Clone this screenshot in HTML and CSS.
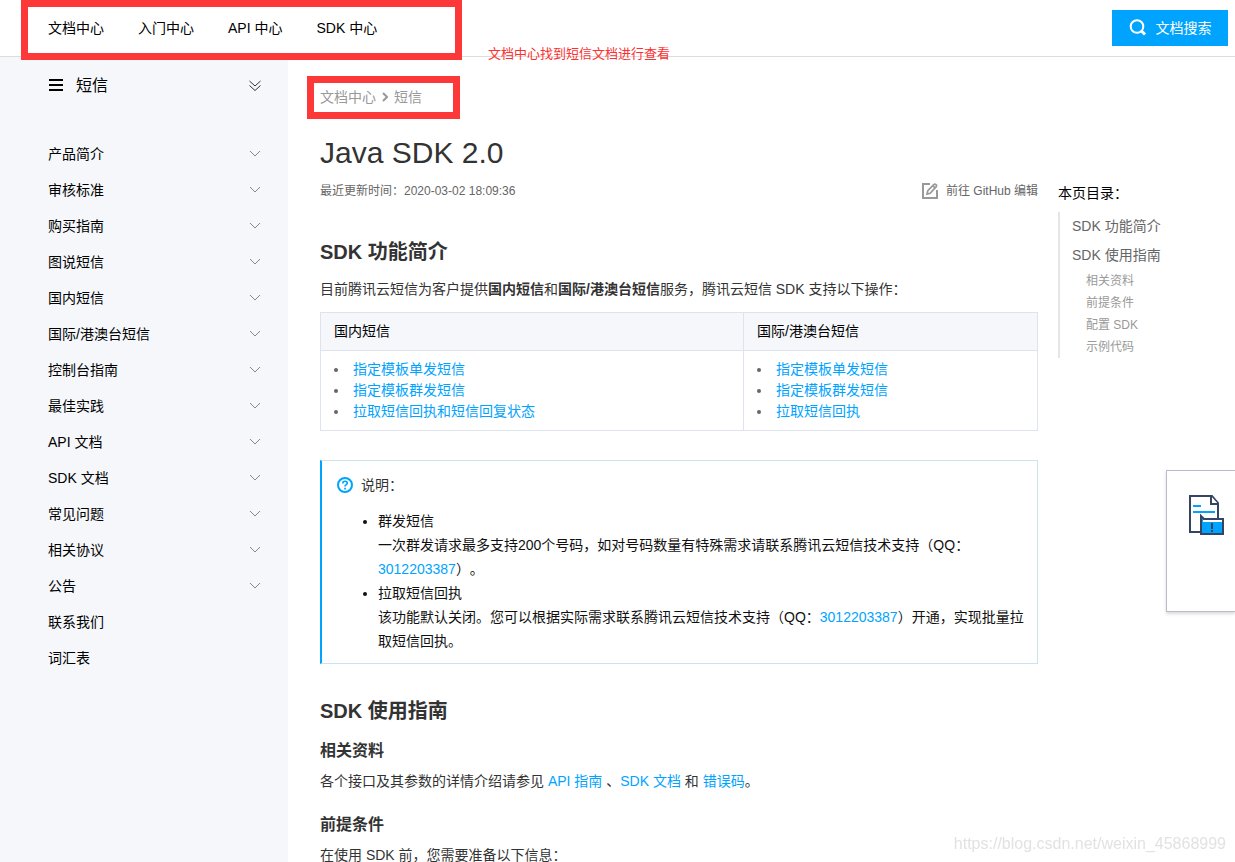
FILE: index.html
```html
<!DOCTYPE html>
<html lang="zh-CN">
<head>
<meta charset="utf-8">
<meta name="viewport" content="width=device-width, initial-scale=1">
<title>Java SDK 2.0</title>
<link rel="stylesheet" href="styles.css">
</head>
<body>
<svg class="sprite" aria-hidden="true">
  <symbol id="chevron" viewBox="0 0 12 8"><path d="M1 1l5 5 5-5" fill="none" stroke="currentColor"/></symbol>
</svg>
<header class="topbar">
  <nav class="topnav">
    <a href="#">文档中心</a>
    <a href="#">入门中心</a>
    <a href="#">API 中心</a>
    <a href="#">SDK 中心</a>
    <span class="frame frame-nav"></span>
  </nav>
  <span class="remark">文档中心找到短信文档进行查看</span>
  <button class="search" type="button">
    <svg width="18" height="18" viewBox="0 0 18 18" aria-hidden="true"><circle cx="8" cy="7.500" r="6.300" fill="none" stroke="#fff" stroke-width="2"/><path d="M12 11.500l4 4" stroke="#fff" stroke-width="3"/></svg>
    文档搜索
  </button>
</header>
<div class="layout">
  <aside class="sidebar">
    <div class="side-head">
      <svg width="16" height="14" viewBox="0 0 16 14" aria-hidden="true"><path d="M1 1h14M1 6h14M1 11h14" stroke="#000" stroke-width="2"/></svg>
      <span class="side-title">短信</span>
      <button class="collapse" type="button" aria-label="全部展开">
        <svg width="12" height="12" viewBox="0 0 12 12" aria-hidden="true"><path d="M.5 1L6 6l5.500-5M.5 5.500L6 10.500l5.500-5" fill="none" stroke="#333"/></svg>
      </button>
    </div>
    <ul class="menu">
      <li><button type="button">产品简介<svg class="chev"><use href="#chevron"/></svg></button></li>
      <li><button type="button">审核标准<svg class="chev"><use href="#chevron"/></svg></button></li>
      <li><button type="button">购买指南<svg class="chev"><use href="#chevron"/></svg></button></li>
      <li><button type="button">图说短信<svg class="chev"><use href="#chevron"/></svg></button></li>
      <li><button type="button">国内短信<svg class="chev"><use href="#chevron"/></svg></button></li>
      <li><button type="button">国际/港澳台短信<svg class="chev"><use href="#chevron"/></svg></button></li>
      <li><button type="button">控制台指南<svg class="chev"><use href="#chevron"/></svg></button></li>
      <li><button type="button">最佳实践<svg class="chev"><use href="#chevron"/></svg></button></li>
      <li><button type="button">API 文档<svg class="chev"><use href="#chevron"/></svg></button></li>
      <li><button type="button">SDK 文档<svg class="chev"><use href="#chevron"/></svg></button></li>
      <li><button type="button">常见问题<svg class="chev"><use href="#chevron"/></svg></button></li>
      <li><button type="button">相关协议<svg class="chev"><use href="#chevron"/></svg></button></li>
      <li><button type="button">公告<svg class="chev"><use href="#chevron"/></svg></button></li>
      <li><a href="#">联系我们</a></li>
      <li><a href="#">词汇表</a></li>
    </ul>
  </aside>
  <main class="article">
    <nav class="crumbs">
      <a href="#">文档中心</a>
      <svg width="6" height="10" viewBox="0 0 6 10" aria-hidden="true"><path d="M1 1l4 4-4 4" fill="none" stroke="#999" stroke-width="2"/></svg>
      <a href="#">短信</a>
      <span class="frame frame-crumbs"></span>
    </nav>
    <h1>Java SDK 2.0</h1>
    <div class="meta">
      <span>最近更新时间：2020-03-02 18:09:36</span>
      <a class="github" href="#">
        <svg width="16" height="16" viewBox="0 0 16 16" aria-hidden="true"><path d="M8 1H1v14h14V7" fill="none" stroke="#999" stroke-width="2"/><path d="M5 11l.8-3.300L12 1.500q1-.8 2 .1t.2 2L8.200 10.200zM10.800 2.700l2.300 2.300" fill="none" stroke="#999" stroke-width="1.700"/></svg>
        前往 GitHub 编辑
      </a>
    </div>
    <h2 id="intro">SDK 功能简介</h2>
    <p>目前腾讯云短信为客户提供<strong>国内短信</strong>和<strong>国际/港澳台短信</strong>服务，腾讯云短信 SDK 支持以下操作：</p>
    <table class="features">
      <thead><tr><th>国内短信</th><th>国际/港澳台短信</th></tr></thead>
      <tbody><tr>
        <td><ul>
          <li><a href="#">指定模板单发短信</a></li>
          <li><a href="#">指定模板群发短信</a></li>
          <li><a href="#">拉取短信回执和短信回复状态</a></li>
        </ul></td>
        <td><ul>
          <li><a href="#">指定模板单发短信</a></li>
          <li><a href="#">指定模板群发短信</a></li>
          <li><a href="#">拉取短信回执</a></li>
        </ul></td>
      </tr></tbody>
    </table>
    <section class="note">
      <div class="note-head">
        <svg width="16" height="16" viewBox="0 0 16 16" aria-hidden="true"><circle cx="8" cy="8" r="7" fill="none" stroke="#00a4ff" stroke-width="2"/><path d="M5.800 6.500C5.800 3.500 10.300 3.600 10.300 6.200 10.300 7.700 8 7.700 8 9.500M8 10.700v1.800" fill="none" stroke="#00a4ff" stroke-width="1.700"/></svg>
        说明：
      </div>
      <ul>
        <li>群发短信<br>一次群发请求最多支持200个号码，如对号码数量有特殊需求请联系腾讯云短信技术支持（QQ：<a href="#">3012203387</a>）。</li>
        <li>拉取短信回执<br>该功能默认关闭。您可以根据实际需求联系腾讯云短信技术支持（QQ：<a href="#">3012203387</a>）开通，实现批量拉取短信回执。</li>
      </ul>
    </section>
    <h2 id="guide" class="after-note">SDK 使用指南</h2>
    <h3 id="related">相关资料</h3>
    <p>各个接口及其参数的详情介绍请参见 <a href="#">API 指南</a> 、<a href="#">SDK 文档</a> 和 <a href="#">错误码</a>。</p>
    <h3 id="pre" class="next">前提条件</h3>
    <p>在使用 SDK 前，您需要准备以下信息：</p>
  </main>
  <nav class="toc">
    <div class="toc-title">本页目录：</div>
    <ul>
      <li><a href="#intro">SDK 功能简介</a></li>
      <li><a href="#guide">SDK 使用指南</a>
        <ul>
          <li><a href="#related">相关资料</a></li>
          <li><a href="#pre">前提条件</a></li>
          <li><a href="#">配置 SDK</a></li>
          <li><a href="#">示例代码</a></li>
        </ul>
      </li>
    </ul>
  </nav>
</div>
<aside class="floater">
  <svg width="36" height="42" viewBox="0 0 36 42" aria-hidden="true">
    <path d="M1 2h22l6 7v29H1z" fill="#fff" stroke="#344563" stroke-width="2"/>
    <path d="M22 2v8h7" fill="#fff" stroke="#344563" stroke-width="2"/>
    <path d="M4 12h8M4 18h22" stroke="#00a4ff" stroke-width="2"/>
    <path d="M12 22l3 3h19v15H12z" fill="#00a4ff" stroke="#344563" stroke-width="2"/>
    <path d="M14 27h19" stroke="#fff" stroke-width="2"/>
    <path d="M23 29v6M23 36v2" stroke="#344563" stroke-width="2"/>
  </svg>
</aside>
<div class="watermark">https://blog.csdn.net/weixin_45868999</div>
</body>
</html>
```
FILE: styles.css
```css
* { box-sizing: border-box; }
body {
  margin: 0;
  min-height: 100vh;
  display: flex;
  flex-direction: column;
  background: #fff;
  color: #333;
  font: 14px/24px "Liberation Sans", "Noto Sans CJK SC", sans-serif;
  text-spacing-trim: space-all;
}
a { color: #00a4ff; text-decoration: none; }
ul { list-style: none; margin: 0; padding: 0; }
button { font: inherit; border: 0; padding: 0; background: none; cursor: pointer; }
svg { display: block; flex: none; }
.sprite { position: absolute; width: 0; height: 0; }

.topbar {
  flex: none;
  position: relative;
  display: flex;
  align-items: center;
  justify-content: space-between;
  height: 57px;
  padding: 0 7px 0 48px;
  border-bottom: 1px solid #ddd;
}
.topnav { display: flex; gap: 34px; }
.topnav a { color: #000; }
.search {
  display: flex;
  align-items: center;
  justify-content: center;
  gap: 9px;
  width: 116px;
  height: 36px;
  background: #00a4ff;
  color: #fff;
}

/* annotations drawn over the page */
.frame { position: absolute; z-index: 2; border: 7px solid #fc3838; pointer-events: none; }
.frame-nav { left: 21px; top: 0; width: 441px; height: 60px; }
.frame-crumbs { left: -13px; top: -11px; width: 153px; height: 43px; }
.remark { position: absolute; left: 488px; top: 42px; color: #fc3030; font-size: 13px; }

.layout { flex: 1; display: flex; }
.sidebar { flex: none; width: 288px; padding: 17px 27px 0 48px; background: #f5f7fb; }
.side-head { display: flex; align-items: center; height: 24px; margin-bottom: 38px; color: #000; }
.side-title { flex: 1; margin-left: 12px; font-size: 16px; }
.menu button, .menu a {
  display: flex;
  align-items: center;
  justify-content: space-between;
  width: 100%;
  height: 36px;
  color: #000;
}
.chev { width: 12px; height: 8px; color: #888; }

.article { flex: 1; min-width: 0; padding: 30px 0 0 32px; }
.crumbs { position: relative; display: flex; align-items: center; gap: 6px; line-height: 20px; }
.crumbs a { color: #999; }
h1, h2, h3, p { margin: 0; }
h1 { margin-top: 26px; font-size: 30px; font-weight: 400; line-height: 40px; }
.meta { display: flex; justify-content: space-between; margin-top: 8px; font-size: 12px; line-height: 20px; color: #666; }
.github { display: flex; align-items: center; gap: 8px; color: #666; }
h2 { margin: 37px 0 11px; font-size: 20px; line-height: 28px; }
h2.after-note { margin: 33px 0 14px; }
h3 { margin-bottom: 6px; font-size: 16px; }
h3.next { margin-top: 20px; }

.features { width: 100%; margin-top: 11px; border-collapse: collapse; table-layout: fixed; line-height: 21px; }
.features th, .features td { padding: 8px 13px; border: 1px solid #dfe3ee; text-align: left; vertical-align: top; }
.features th { background: #f5f7fb; color: #000; font-weight: 400; }
.features th:first-child { width: 59%; }
.features ul { padding-left: 15px; color: #666; list-style: disc; }
.features li { padding-left: 4px; }

.note { margin-top: 29px; padding: 12px 10px 10px 15px; border: 1px solid #cbe3ef; border-left: 2px solid #00a4ff; }
.note-head { display: flex; align-items: center; gap: 8px; margin-bottom: 12px; }
.note ul { padding-left: 41px; list-style: disc; color: #111; }

.toc { flex: none; width: 197px; padding: 124px 20px 0; }
.toc-title { margin-bottom: 7px; color: #000; }
.toc > ul { padding-left: 12px; border-left: 2px solid #e5e5e5; line-height: 29px; }
.toc a { display: block; color: #666; }
.toc ul ul { padding-left: 14px; font-size: 12px; line-height: 22px; }
.toc ul ul a { color: #999; }

.floater {
  position: fixed;
  right: 0;
  top: 470px;
  width: 69px;
  height: 142px;
  padding: 23px 0 0 22px;
  background: #fff;
  border: 1px solid #b8bdc9;
  border-right: 0;
  box-shadow: 0 2px 3px rgba(0, 0, 0, .15);
}
.watermark { position: fixed; right: 9px; bottom: 6px; color: #e2e2e2; font-size: 16px; }
```
